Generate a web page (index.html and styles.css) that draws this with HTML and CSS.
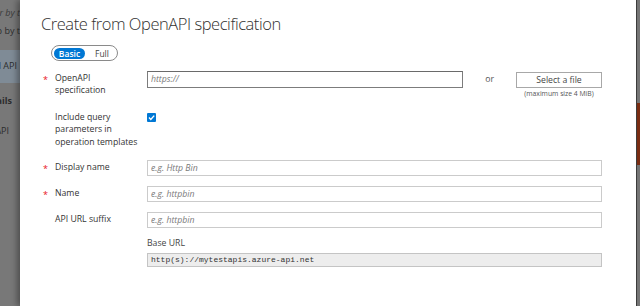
FILE: index.html
```html
<!DOCTYPE html>
<html lang="en">
<head>
    <meta charset="UTF-8">
    <meta name="viewport" content="width=device-width, initial-scale=1.0">
    <title>Create from OpenAPI specification</title>
    <link rel="stylesheet" href="styles.css">
</head>
<body>
    <div class="screen">
        <!-- portal blade behind the dialog -->
        <aside class="behind">
            <div class="behind-inner">
                <div class="bg-line bg-filter">Filter by t</div>
                <div class="bg-line bg-group">Group by t</div>
                <div class="bg-line bg-active">Add API</div>
                <div class="bg-line bg-head">Details</div>
                <div class="bg-line bg-item">API</div>
            </div>
        </aside>

        <section class="dialog">
            <h1 class="title">Create from OpenAPI specification</h1>

            <div class="toggle">
                <span class="toggle-opt on">Basic</span>
                <span class="toggle-opt">Full</span>
            </div>

            <div class="form">
                <div class="row row-spec">
                    <span class="req">*</span>
                    <label class="lbl" for="spec">OpenAPI<br>specification</label>
                    <div class="ctrl ctrl-spec">
                        <input id="spec" class="field field-focus" placeholder="https://">
                        <span class="or">or</span>
                        <div class="file">
                            <button class="file-btn" type="button">Select a file</button>
                            <div class="hint">(maximum size 4 MiB)</div>
                        </div>
                    </div>
                </div>

                <div class="row row-check">
                    <span class="req"></span>
                    <label class="lbl">Include query<br>parameters in<br>operation templates</label>
                    <div class="ctrl">
                        <span class="check">
                            <svg width="9" height="9" viewBox="0 0 9 9">
                                <path d="M2 4.6 L3.8 6.4 L7.2 2.6" fill="none" stroke="#fff" stroke-width="1.4"/>
                            </svg>
                        </span>
                    </div>
                </div>

                <div class="row">
                    <span class="req">*</span>
                    <label class="lbl" for="display">Display name</label>
                    <div class="ctrl">
                        <input id="display" class="field" placeholder="e.g. Http Bin">
                    </div>
                </div>

                <div class="row">
                    <span class="req">*</span>
                    <label class="lbl" for="name">Name</label>
                    <div class="ctrl">
                        <input id="name" class="field" placeholder="e.g. httpbin">
                    </div>
                </div>

                <div class="row">
                    <span class="req"></span>
                    <label class="lbl" for="suffix">API URL suffix</label>
                    <div class="ctrl">
                        <input id="suffix" class="field" placeholder="e.g. httpbin">
                    </div>
                </div>

                <div class="row row-base">
                    <span class="req"></span>
                    <span class="lbl"></span>
                    <div class="ctrl ctrl-base">
                        <div class="sub-lbl">Base URL</div>
                        <div class="readonly">http(s)://mytestapis.azure-api.net</div>
                    </div>
                </div>
            </div>
        </section>

        <!-- edge of the window on the right -->
        <aside class="edge">
            <div class="edge-accent"></div>
        </aside>
    </div>
</body>
</html>
```

FILE: styles.css
```css
* {
    box-sizing: border-box;
}
html, body {
    margin: 0;
    padding: 0;
}
body {
    font-family: "Open Sans", "Noto Sans", sans-serif;
    color: #333;
    background: #777;
    overflow: hidden;
}
.screen {
    display: flex;
    width: 640px;
    height: 306px;
}

/* blade behind the dialog */
.behind {
    flex: none;
    width: 20px;
    background: #787878;
    overflow: hidden;
}
.behind-inner {
    width: 80px;
    margin-left: -60px;
    font-size: 9px;
    color: #2c2c2c;
    white-space: nowrap;
    text-align: right;
}
.bg-line {
    line-height: 12px;
}
.bg-filter {
    padding-top: 7px;
    font-style: italic;
    color: #3a3a3a;
}
.bg-group {
    margin-top: 6px;
}
.bg-active {
    margin-top: 13px;
    height: 33px;
    padding-top: 10px;
    padding-right: 3px;
    background: #7f8b96;
}
.bg-head {
    margin-top: 12px;
    padding-right: 8px;
    font-weight: 700;
}
.bg-item {
    margin-top: 18px;
    padding-right: 11px;
}

/* dialog */
.dialog {
    flex: 1;
    background: #fff;
    padding: 14px 34px 0 21px;
    box-shadow: -3px 0 6px rgba(0, 0, 0, 0.35);
}
.title {
    margin: 0;
    font-size: 16.5px;
    font-weight: 300;
    letter-spacing: -0.45px;
    line-height: 20px;
    color: #323130;
}
.toggle {
    display: inline-flex;
    align-items: center;
    margin: 11px 0 0 10px;
    height: 16px;
    width: 67px;
    padding: 0 2px;
    border: 1px solid #8a8a8a;
    border-radius: 8px;
}
.toggle-opt {
    font-size: 8.5px;
    line-height: 11px;
    padding: 0 4px;
    color: #444;
}
.toggle-opt.on {
    width: 31px;
    text-align: center;
    background: #0078d4;
    color: #fff;
    font-weight: 600;
    border-radius: 6px;
    margin-right: 6px;
}

.form {
    margin: 9px 0 0 2px;
}
.row {
    display: grid;
    grid-template-columns: 12px 92px 1fr;
    margin-bottom: 10px;
}
.row-spec {
    margin-bottom: 11px;
}
.row-check {
    margin-bottom: 12px;
}
.row-base {
    margin-top: -1px;
}
.req {
    color: #e81123;
    font-size: 9px;
    line-height: 13px;
    padding-top: 2px;
}
.lbl {
    font-size: 8.7px;
    line-height: 12.5px;
    padding-top: 1px;
    color: #333;
}
.ctrl {
    display: flex;
    flex-direction: column;
}
.ctrl-spec {
    flex-direction: row;
    align-items: flex-start;
}
.field {
    width: 100%;
    height: 16px;
    padding: 0 3px;
    border: 1px solid #cbcbcb;
    font-family: "Open Sans", "Noto Sans", sans-serif;
    font-size: 8.7px;
    color: #333;
    background: #fff;
    outline: none;
}
.field::placeholder {
    color: #7a7a7a;
    font-style: italic;
    opacity: 1;
}
.field-focus {
    flex: 1;
    height: 17px;
    border-color: #7c7c7c;
    border-top-color: #6a6a6a;
}
.or {
    margin: 0 22px;
    font-size: 8.7px;
    line-height: 17px;
    color: #555;
}
.file {
    flex: none;
    width: 86px;
}
.file-btn {
    display: block;
    width: 100%;
    height: 16px;
    margin-top: 1px;
    padding: 0;
    border: 1px solid #a8a8a8;
    background: #fff;
    font-family: "Open Sans", "Noto Sans", sans-serif;
    font-size: 8.7px;
    color: #444;
}
.hint {
    margin-top: 1px;
    text-align: center;
    font-size: 6.8px;
    line-height: 10px;
    color: #555;
}
.check {
    display: flex;
    width: 9px;
    height: 9px;
    margin-top: 3px;
    background: #0078d4;
    border-radius: 1px;
}
.sub-lbl {
    font-size: 8.7px;
    line-height: 12.5px;
    color: #444;
}
.readonly {
    margin-top: 3px;
    height: 14px;
    padding-left: 3px;
    border: 1px solid #c4c4c4;
    background: #ededed;
    font-family: "Liberation Mono", "DejaVu Sans Mono", monospace;
    font-size: 8px;
    line-height: 12px;
    color: #333;
}

/* window edge on the right */
.edge {
    flex: none;
    width: 4px;
    border-left: 1px solid #3c3c3c;
    background: #757575;
}
.edge-accent {
    margin-top: 103px;
    height: 62px;
    background: #7a2d12;
}
```
